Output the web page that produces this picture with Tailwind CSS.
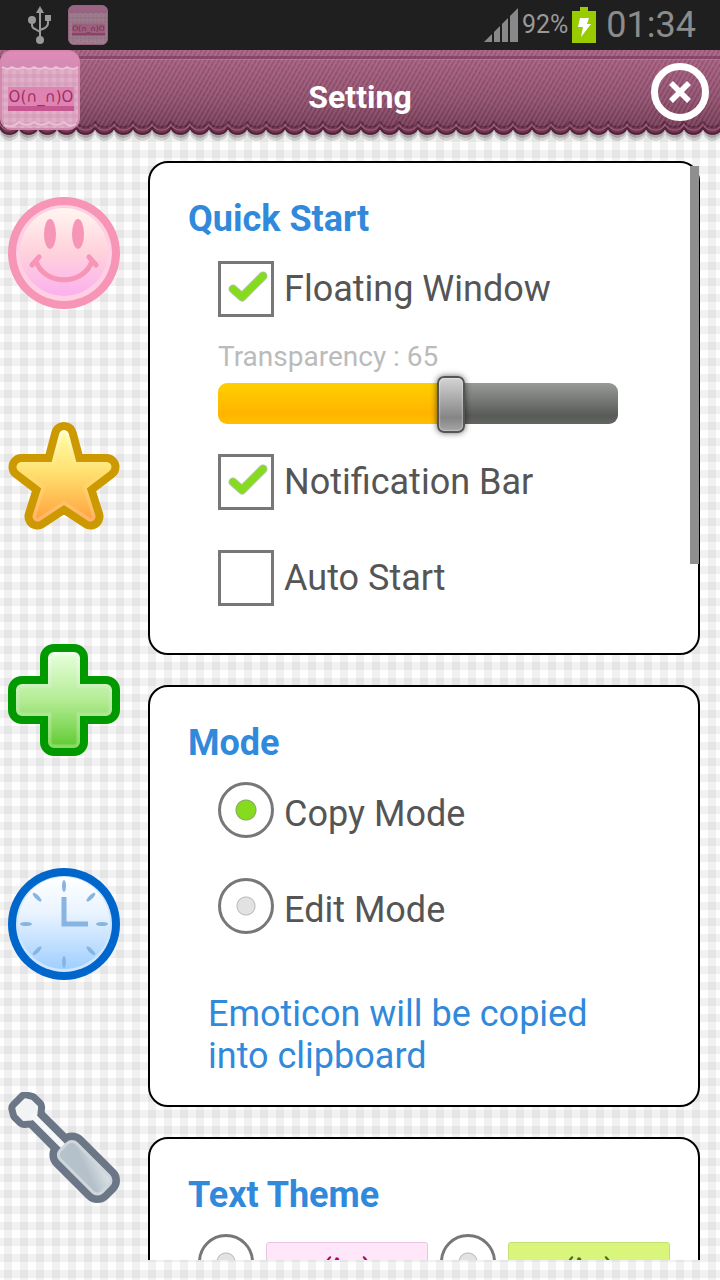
<!DOCTYPE html>
<html lang="en">
<head>
    <meta charset="UTF-8">
    <meta name="viewport" content="width=device-width, initial-scale=1.0">
    <title>Setting</title>
    <script src="https://cdn.jsdelivr.net/npm/@tailwindcss/browser@4"></script>
</head>
<body class="font-[Roboto,sans-serif]">
    <!-- Shared symbols -->
    <svg class="absolute h-0 w-0" aria-hidden="true">
        <defs>
            <linearGradient id="appTop" x1="0" y1="0" x2="0" y2="1">
                <stop offset="0" stop-color="#e08ab8" />
                <stop offset="1" stop-color="#cf8db4" />
            </linearGradient>
            <pattern id="appPlaid" width="8" height="8" patternUnits="userSpaceOnUse">
                <rect width="8" height="8" fill="#dfb0c8" />
                <rect width="4" height="8" fill="#d7a0bd" fill-opacity=".6" />
                <rect width="8" height="4" fill="#d090b2" fill-opacity=".35" />
            </pattern>
            <symbol id="app" viewBox="0 0 80 80">
                <rect x="1" y="1" width="78" height="78" rx="11" fill="url(#appPlaid)" stroke="#d488ae" stroke-width="2" />
                <path d="M2 18V12Q2 2 12 2H68Q78 2 78 12V18q-6 4-11 0q-6 4-11 0q-6 4-11 0q-6 4-11 0q-6 4-11 0q-6 4-11 0q-6 4-10 0Z" fill="url(#appTop)" />
                <path d="M2 17q6 4 10 0q6 4 11 0q6 4 11 0q6 4 11 0q6 4 11 0q6 4 11 0q6 4 11 0" fill="none" stroke="#efc0d8" stroke-width="2" />
                <path d="M4 75q8 4 15-3q8 6 15 0q8 6 15 0q8 6 15 0q6 6 12 2" fill="none" stroke="#e9c0d5" stroke-width="2" />
                <rect x="8" y="37" width="66" height="20" fill="#df84b2" />
                <rect x="8" y="56" width="66" height="5" fill="#c45790" />
                <text x="41" y="52" text-anchor="middle" font-family="'DejaVu Sans', sans-serif" font-size="15" fill="#9c2f63">O(∩_∩)O</text>
            </symbol>
        </defs>
    </svg>

    <div class="flex h-screen flex-col overflow-hidden bg-[#fefefe] bg-[repeating-linear-gradient(90deg,#0000_0_4px,#0000000d_4px_12px,#0000_12px_16px),repeating-linear-gradient(180deg,#0000_0_6px,#0000000d_6px_14px,#0000_14px_16px)]">
        <!-- Status bar -->
        <div class="flex h-[50px] shrink-0 items-center bg-[#1f1f1f] pl-7 pr-6 text-[#999]">
            <svg class="h-10 w-6" viewBox="0 0 24 40" fill="none" stroke="#999" stroke-width="2" aria-label="USB">
                <path d="M12 8V34M4 16V20Q4 23 7 24L12 27M20 13V18Q20 21 17 23L12 25" />
                <path d="M12 1L16 8H8Z" fill="#999" stroke="none" />
                <circle cx="12" cy="35" r="4" fill="#999" stroke="none" />
                <circle cx="4" cy="15" r="4" fill="#999" stroke="none" />
                <path d="M17 10H23V16H17Z" fill="#999" stroke="none" />
            </svg>
            <svg class="ml-4 h-10 w-10 opacity-65"><use href="#app" /></svg>
            <div class="ml-auto flex items-center">
                <svg class="h-[34px] w-[34px]" viewBox="0 0 34 34" aria-label="Signal">
                    <path d="M0 34L34 0V34Z" fill="#888" />
                    <path d="M9 20V34M17 12V34M25 4V34" stroke="#1f1f1f" stroke-width="2" />
                </svg>
                <span class="ml-1 text-[25px]">92%</span>
                <svg class="ml-1 h-9 w-6" viewBox="0 0 24 36" aria-label="Charging">
                    <path d="M8 0H16V4H24V36H0V4H8Z" fill="#9c0" />
                    <path d="M8 11H17L15 17H19L9 30L11 20H6Z" fill="#fff" />
                </svg>
                <span class="ml-[10px] text-[36px] text-[#8c8c8c]">01:34</span>
            </div>
        </div>

        <!-- Title bar -->
        <header class="relative h-[91px] shrink-0">
            <svg class="absolute inset-0 h-full w-full" aria-hidden="true">
                <defs>
                    <linearGradient id="cloth" gradientUnits="userSpaceOnUse" x1="0" y1="0" x2="0" y2="86">
                        <stop offset="0" stop-color="#a35e80" />
                        <stop offset=".15" stop-color="#a05a7b" />
                        <stop offset=".6" stop-color="#8b4c69" />
                        <stop offset="1" stop-color="#6d354e" />
                    </linearGradient>
                    <pattern id="scallop" width="19" height="91" patternUnits="userSpaceOnUse">
                        <path d="M0 0H19V84C16 93 3 93 0 84Z" fill="#000" fill-opacity=".12" />
                        <path d="M0 0H19V81C16 90 3 90 0 81Z" fill="#000" fill-opacity=".18" />
                        <path d="M0 0H19V78C16 87 3 87 0 78Z" fill="url(#cloth)" />
                        <path d="M0 77C3 86 16 86 19 77" fill="none" stroke="#56203a" stroke-width="2" />
                        <path d="M0 74C3 82 16 82 19 74" fill="none" stroke="#a46380" stroke-width="1" />
                        <path d="M0 71C3 79 16 79 19 71" fill="none" stroke="#5c2640" stroke-width="2" />
                    </pattern>
                    <pattern id="twill" width="4" height="6" patternUnits="userSpaceOnUse" patternTransform="rotate(30)">
                        <rect width="2" height="6" fill="#fff" fill-opacity=".09" />
                        <rect x="2" width="1" height="4" fill="#401028" fill-opacity=".16" />
                    </pattern>
                </defs>
                <rect width="100%" height="91" fill="url(#scallop)" />
                <rect width="100%" height="78" fill="url(#twill)" />
                <rect y="6" width="100%" height="3" fill="#6b2f4d" fill-opacity=".5" />
                <rect y="9" width="100%" height="1" fill="#c58aa6" fill-opacity=".5" />
            </svg>
            <div class="relative grid h-[84px] grid-cols-[1fr_auto_1fr] items-center">
                <svg class="h-20 w-20 self-start"><use href="#app" /></svg>
                <h1 class="pt-[10px] text-[32px] font-bold text-white">Setting</h1>
                <button type="button" aria-label="Close" class="mr-[11px] justify-self-end">
                    <svg class="h-[58px] w-[58px]" viewBox="0 0 58 58" fill="none" stroke="#fff">
                        <circle cx="29" cy="29" r="25.5" stroke-width="7" />
                        <path d="M20 20L38 38M38 20L20 38" stroke-width="5.5" />
                    </svg>
                </button>
            </div>
        </header>

        <main class="mb-5 flex min-h-0 flex-1">
            <!-- Side tabs -->
            <nav class="grid w-32 shrink-0 grid-rows-5 place-items-center">
                <button type="button" aria-label="Emoticons">
                    <svg class="h-28 w-28" viewBox="0 0 112 112">
                        <linearGradient id="gSmile" x1="0" y1="0" x2="0" y2="1">
                            <stop offset="0" stop-color="#fff6f2" />
                            <stop offset=".5" stop-color="#ffd2dc" />
                            <stop offset="1" stop-color="#fbb0ee" />
                        </linearGradient>
                        <circle cx="56" cy="56" r="56" fill="#f695b5" />
                        <circle cx="56" cy="56" r="48" fill="#ffd0e4" />
                        <circle cx="56" cy="55" r="44" fill="url(#gSmile)" />
                        <ellipse cx="42" cy="37" rx="6" ry="15" fill="#f695b5" />
                        <ellipse cx="70" cy="37" rx="6" ry="15" fill="#f695b5" />
                        <path d="M28 64C36 89 76 89 84 64M24 68L31 60M88 68L81 60" fill="none" stroke="#f695b5" stroke-width="5" stroke-linecap="round" />
                    </svg>
                </button>
                <button type="button" aria-label="Favorites">
                    <svg class="h-28 w-28" viewBox="0 0 112 112" stroke-linejoin="round">
                        <linearGradient id="gStar" gradientUnits="userSpaceOnUse" x1="0" y1="8" x2="0" y2="104">
                            <stop offset="0" stop-color="#ffffa8" />
                            <stop offset=".45" stop-color="#ffe070" />
                            <stop offset="1" stop-color="#ff9c38" />
                        </linearGradient>
                        <linearGradient id="gStarRim" gradientUnits="userSpaceOnUse" x1="0" y1="8" x2="0" y2="104">
                            <stop offset="0" stop-color="#ffffd8" />
                            <stop offset=".45" stop-color="#ffe26c" />
                            <stop offset="1" stop-color="#ffae68" />
                        </linearGradient>
                        <path d="M56 14L64.4 45.7L98.5 46L73 65.5L82.5 95.5L56 78L29.5 95.5L39 65.5L13.5 46L47.6 45.7Z" fill="#c90" stroke="#c90" stroke-width="26" />
                        <path d="M56 14L64.4 45.7L98.5 46L73 65.5L82.5 95.5L56 78L29.5 95.5L39 65.5L13.5 46L47.6 45.7Z" fill="url(#gStar)" stroke="url(#gStarRim)" stroke-width="10" />
                        <path d="M56 14L64.4 45.7L98.5 46L73 65.5L82.5 95.5L56 78L29.5 95.5L39 65.5L13.5 46L47.6 45.7Z" fill="url(#gStar)" stroke="url(#gStar)" stroke-width="3" />
                    </svg>
                </button>
                <button type="button" aria-label="Add">
                    <svg class="h-28 w-28" viewBox="0 0 112 112" stroke-linejoin="round">
                        <linearGradient id="gPlus" gradientUnits="userSpaceOnUse" x1="0" y1="8" x2="0" y2="104">
                            <stop offset="0" stop-color="#e6ffdc" />
                            <stop offset=".5" stop-color="#b4ec94" />
                            <stop offset="1" stop-color="#5fca30" />
                        </linearGradient>
                        <linearGradient id="gPlusRim" gradientUnits="userSpaceOnUse" x1="0" y1="8" x2="0" y2="104">
                            <stop offset="0" stop-color="#f2ffec" />
                            <stop offset="1" stop-color="#86da62" />
                        </linearGradient>
                        <path d="M46 14H66V46H98V66H66V98H46V66H14V46H46Z" fill="#090" stroke="#090" stroke-width="28" />
                        <path d="M46 14H66V46H98V66H66V98H46V66H14V46H46Z" fill="url(#gPlus)" stroke="url(#gPlusRim)" stroke-width="12" />
                        <path d="M46 14H66V46H98V66H66V98H46V66H14V46H46Z" fill="url(#gPlus)" stroke="url(#gPlus)" stroke-width="5" />
                    </svg>
                </button>
                <button type="button" aria-label="History">
                    <svg class="h-28 w-28" viewBox="0 0 112 112">
                        <linearGradient id="gClock" x1="0" y1="0" x2="0" y2="1">
                            <stop offset="0" stop-color="#fff" />
                            <stop offset=".4" stop-color="#e8f3ff" />
                            <stop offset="1" stop-color="#a0cfff" />
                        </linearGradient>
                        <circle cx="56" cy="56" r="56" fill="#06c" />
                        <circle cx="56" cy="56" r="48" fill="#cfe6ff" />
                        <circle cx="56" cy="55" r="46" fill="url(#gClock)" />
                        <g fill="#88b4e2">
                            <ellipse cx="56" cy="18" rx="2" ry="6" />
                            <ellipse cx="56" cy="94" rx="2" ry="6" />
                            <ellipse cx="18" cy="56" rx="6" ry="2" />
                            <ellipse cx="94" cy="56" rx="6" ry="2" />
                            <ellipse cx="56" cy="18" rx="2" ry="6" transform="rotate(45 56 56)" />
                            <ellipse cx="56" cy="18" rx="2" ry="6" transform="rotate(135 56 56)" />
                            <ellipse cx="56" cy="18" rx="2" ry="6" transform="rotate(225 56 56)" />
                            <ellipse cx="56" cy="18" rx="2" ry="6" transform="rotate(315 56 56)" />
                        </g>
                        <path d="M56 29V56H80" fill="none" stroke="#88b4e2" stroke-width="5" />
                    </svg>
                </button>
                <button type="button" aria-label="Settings">
                    <svg class="h-28 w-28" viewBox="0 0 112 112" stroke-linejoin="round">
                        <linearGradient id="gTool" x1="0" y1="1" x2="1" y2="0">
                            <stop offset="0" stop-color="#b8c4cc" />
                            <stop offset=".5" stop-color="#b4c0ca" />
                            <stop offset="1" stop-color="#dde3e7" />
                        </linearGradient>
                        <g transform="translate(18 17) rotate(45)">
                            <g fill="#6b7686" stroke="#6b7686" stroke-width="17">
                                <path d="M-7 -6L-2 -9H6L11 -3V3L6 9H-2L-7 6Z" />
                                <path d="M0 0H55" stroke-width="22" />
                                <rect x="53" y="-12" width="60" height="24" rx="7" />
                            </g>
                            <path d="M-7 -6L-2 -9H6L11 -3V3L6 9H-2L-7 6Z" fill="#f2f3f4" stroke="#f2f3f4" stroke-width="3" />
                            <path d="M8 0H53" stroke="#f6f7f8" stroke-width="6" />
                            <rect x="52" y="-13" width="62" height="26" rx="8" fill="#cfd7dc" />
                            <rect x="55" y="-10" width="56" height="20" rx="5" fill="url(#gTool)" />
                        </g>
                    </svg>
                </button>
            </nav>

            <!-- Settings list -->
            <div class="relative ml-5 mr-5 flex-1 overflow-hidden pt-5">
                <div class="flex flex-col gap-[30px]">
                    <section class="rounded-[20px] border-2 border-black bg-white px-[38px] pt-[35px] pb-[47px]">
                        <h2 class="text-[36px] leading-[42px] font-bold text-[#3189dc]">Quick Start</h2>
                        <div class="mt-[21px] ml-[30px]">
                            <label class="flex h-14 items-center gap-[10px] text-[36px] text-[#555]">
                                <span class="grid">
                                    <input type="checkbox" checked class="peer col-start-1 row-start-1 h-14 w-14 appearance-none border-[3px] border-[#777] bg-white">
                                    <svg class="invisible col-start-1 row-start-1 h-14 w-14 peer-checked:visible" viewBox="0 0 56 56" fill="none" stroke-linecap="round" stroke-linejoin="round">
                                        <path d="M15 28L24 36L45 15" stroke="#b5c4a4" stroke-width="9" />
                                        <path d="M15 28L24 36L45 15" stroke="#85dc1c" stroke-width="7" />
                                    </svg>
                                </span>
                                Floating Window
                            </label>
                            <label for="transparency" class="mt-6 block text-[28px] leading-8 text-[#bbb]">Transparency : <output id="transparencyValue">65</output></label>
                            <input type="range" id="transparency" min="15" max="100" value="65" style="--fill: 58%"
                                   class="mt-[2px] block h-[57px] w-[400px] max-w-full appearance-none bg-transparent
                                          [&::-webkit-slider-runnable-track]:h-[41px] [&::-webkit-slider-runnable-track]:rounded-[9px]
                                          [&::-webkit-slider-runnable-track]:bg-[linear-gradient(#ffcf00,#ffb400_75%,#ffc000),linear-gradient(#999b99,#585a57_80%,#646663)]
                                          [&::-webkit-slider-runnable-track]:[background-size:var(--fill)_100%,100%_100%]
                                          [&::-webkit-slider-runnable-track]:bg-no-repeat
                                          [&::-webkit-slider-thumb]:-mt-[7px] [&::-webkit-slider-thumb]:h-[57px] [&::-webkit-slider-thumb]:w-7 [&::-webkit-slider-thumb]:appearance-none
                                          [&::-webkit-slider-thumb]:rounded-[7px] [&::-webkit-slider-thumb]:border-2 [&::-webkit-slider-thumb]:border-[#555]
                                          [&::-webkit-slider-thumb]:bg-[linear-gradient(#d4d4d4,#858585_75%,#a6a6a6)]
                                          [&::-webkit-slider-thumb]:shadow-[0_0_6px_#0009,inset_0_0_2px_#fff]">
                            <label class="mt-[22px] flex h-14 items-center gap-[10px] text-[36px] text-[#555]">
                                <span class="grid">
                                    <input type="checkbox" checked class="peer col-start-1 row-start-1 h-14 w-14 appearance-none border-[3px] border-[#777] bg-white">
                                    <svg class="invisible col-start-1 row-start-1 h-14 w-14 peer-checked:visible" viewBox="0 0 56 56" fill="none" stroke-linecap="round" stroke-linejoin="round">
                                        <path d="M15 28L24 36L45 15" stroke="#b5c4a4" stroke-width="9" />
                                        <path d="M15 28L24 36L45 15" stroke="#85dc1c" stroke-width="7" />
                                    </svg>
                                </span>
                                Notification Bar
                            </label>
                            <label class="mt-10 flex h-14 items-center gap-[10px] text-[36px] text-[#555]">
                                <span class="grid">
                                    <input type="checkbox" class="peer col-start-1 row-start-1 h-14 w-14 appearance-none border-[3px] border-[#777] bg-white">
                                    <svg class="invisible col-start-1 row-start-1 h-14 w-14 peer-checked:visible" viewBox="0 0 56 56" fill="none" stroke-linecap="round" stroke-linejoin="round">
                                        <path d="M15 28L24 36L45 15" stroke="#b5c4a4" stroke-width="9" />
                                        <path d="M15 28L24 36L45 15" stroke="#85dc1c" stroke-width="7" />
                                    </svg>
                                </span>
                                Auto Start
                            </label>
                        </div>
                    </section>

                    <section class="rounded-[20px] border-2 border-black bg-white px-[38px] pt-[35px] pb-7">
                        <h2 class="text-[36px] leading-[42px] font-bold text-[#3189dc]">Mode</h2>
                        <div class="mt-[18px] ml-[30px]">
                            <label class="flex gap-[10px] text-[36px] leading-16 text-[#555]">
                                <input type="radio" name="mode" checked class="h-14 w-14 appearance-none rounded-full border-[3px] border-[#777] bg-[radial-gradient(circle,#85dc1c_0_9px,#8aa56a_10px,#fff_11px)] not-checked:bg-[radial-gradient(circle,#e2e2e2_0_8px,#bbb_9px,#fff_10px)]">
                                Copy Mode
                            </label>
                            <label class="mt-8 flex gap-[10px] text-[36px] leading-16 text-[#555]">
                                <input type="radio" name="mode" class="h-14 w-14 appearance-none rounded-full border-[3px] border-[#777] bg-[radial-gradient(circle,#85dc1c_0_9px,#8aa56a_10px,#fff_11px)] not-checked:bg-[radial-gradient(circle,#e2e2e2_0_8px,#bbb_9px,#fff_10px)]">
                                Edit Mode
                            </label>
                        </div>
                        <p class="mt-[51px] ml-5 max-w-[420px] text-[36px] leading-[42px] text-[#3189dc]">Emoticon will be copied into clipboard</p>
                    </section>

                    <section class="rounded-[20px] border-2 border-black bg-white px-[38px] pt-[35px] pb-10">
                        <h2 class="text-[36px] leading-[42px] font-bold text-[#3189dc]">Text Theme</h2>
                        <div class="mt-[18px] ml-[10px] flex gap-3">
                            <label class="flex gap-3">
                                <input type="radio" name="theme" class="h-14 w-14 appearance-none rounded-full border-[3px] border-[#777] bg-[radial-gradient(circle,#85dc1c_0_9px,#8aa56a_10px,#fff_11px)] not-checked:bg-[radial-gradient(circle,#e2e2e2_0_8px,#bbb_9px,#fff_10px)]">
                                <span class="mt-2 h-14 w-[162px] rounded-[3px] border border-[#e8c4e0] bg-[#ffe6f9] text-center text-[24px] leading-[48px] font-bold text-[#b8004c]">(^_-)</span>
                            </label>
                            <label class="flex gap-3">
                                <input type="radio" name="theme" class="h-14 w-14 appearance-none rounded-full border-[3px] border-[#777] bg-[radial-gradient(circle,#85dc1c_0_9px,#8aa56a_10px,#fff_11px)] not-checked:bg-[radial-gradient(circle,#e2e2e2_0_8px,#bbb_9px,#fff_10px)]">
                                <span class="mt-2 h-14 w-[162px] rounded-[3px] border border-[#c4e070] bg-[#daf57c] text-center text-[24px] leading-[48px] font-bold text-[#4a6b00]">(^_-)</span>
                            </label>
                        </div>
                    </section>
                </div>
                <!-- Scroll indicator -->
                <div class="absolute top-[25px] right-px h-[398px] w-[9px] bg-[#8f8f8f]"></div>
            </div>
        </main>
    </div>

    <script>
        // Keep the slider label and the filled part of the track in step with the thumb
        const slider = document.getElementById('transparency');
        slider.addEventListener('input', function() {
            document.getElementById('transparencyValue').textContent = slider.value;
            slider.style.setProperty('--fill', (slider.value - slider.min) / (slider.max - slider.min) * 100 + '%');
        });
    </script>
</body>
</html>
